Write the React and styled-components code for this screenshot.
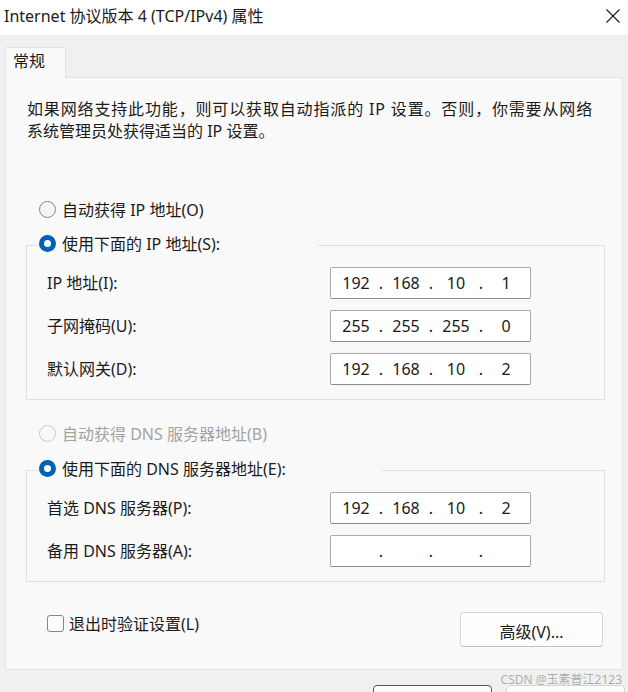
import React from "react";
import styled, { createGlobalStyle } from "styled-components";

const GlobalStyle = createGlobalStyle`
  html, body {
    margin: 0;
    padding: 0;
    background: #f0f0f0;
  }
  body {
    font-family: "Noto Sans", "Noto Sans CJK SC", sans-serif;
    color: #1b1b1b;
  }
  * { box-sizing: border-box; }
`;

const ipGroup = [
  { label: "IP 地址(I):", value: ["192", "168", "10", "1"] },
  { label: "子网掩码(U):", value: ["255", "255", "255", "0"] },
  { label: "默认网关(D):", value: ["192", "168", "10", "2"] },
];

const dnsGroup = [
  { label: "首选 DNS 服务器(P):", value: ["192", "168", "10", "2"] },
  { label: "备用 DNS 服务器(A):", value: ["", "", "", ""] },
];

const IpInput = ({ value }) => (
  <IpBox>
    {value.map((v, i) => (
      <React.Fragment key={i}>
        <Octet>{v}</Octet>
        {i < 3 && <Dot>.</Dot>}
      </React.Fragment>
    ))}
  </IpBox>
);

const App = () => {
  return (
    <Window>
      <GlobalStyle />
      <TitleBar>
        <Title>Internet 协议版本 4 (TCP/IPv4) 属性</Title>
        <Close viewBox="0 0 14 14">
          <path d="M0.5 0.5 L13.5 13.5 M13.5 0.5 L0.5 13.5" />
        </Close>
      </TitleBar>

      <TabStrip>
        <Tab>常规</Tab>
      </TabStrip>

      <Panel>
        <Intro>
          <IntroLine $spacing={0.85}>
            如果网络支持此功能，则可以获取自动指派的 IP 设置。否则，你需要从网络
          </IntroLine>
          <IntroLine>系统管理员处获得适当的 IP 设置。</IntroLine>
        </Intro>

        <RadioRow $top={56}>
          <Radio />
          自动获得 IP 地址(O)
        </RadioRow>

        <Group $top={12}>
          <Legend $width={279}>
            <RadioLabel>
              <Radio $checked />
              使用下面的 IP 地址(S):
            </RadioLabel>
          </Legend>
          <FieldGrid>
            {ipGroup.map((f) => (
              <React.Fragment key={f.label}>
                <FieldLabel>{f.label}</FieldLabel>
                <IpInput value={f.value} />
              </React.Fragment>
            ))}
          </FieldGrid>
        </Group>

        <RadioRow $top={22} $disabled>
          <Radio $disabled />
          自动获得 DNS 服务器地址(B)
        </RadioRow>

        <Group $top={13}>
          <Legend $width={343}>
            <RadioLabel>
              <Radio $checked />
              使用下面的 DNS 服务器地址(E):
            </RadioLabel>
          </Legend>
          <FieldGrid>
            {dnsGroup.map((f) => (
              <React.Fragment key={f.label}>
                <FieldLabel>{f.label}</FieldLabel>
                <IpInput value={f.value} />
              </React.Fragment>
            ))}
          </FieldGrid>
        </Group>

        <Footer>
          <CheckRow>
            <CheckBox />
            退出时验证设置(L)
          </CheckRow>
          <Button>高级(V)...</Button>
        </Footer>
      </Panel>

      {/* OK / Cancel sit below the visible edge, only their tops show */}
      <BottomBar>
        <DialogButton $primary />
        <DialogButton />
      </BottomBar>

      <Watermark>CSDN @玉素普江2123</Watermark>
    </Window>
  );
};

const Window = styled.div`
  position: relative;
  width: 628px;
  height: 692px;
  overflow: hidden;
  background: #f0f0f0;
`;

const TitleBar = styled.div`
  height: 35px;
  background: #fff;
  display: flex;
  align-items: center;
  justify-content: space-between;
  padding: 0 8px 0 4px;
`;

const Title = styled.div`
  font-size: 16px;
  line-height: 22px;
  color: #1a1a1a;
  margin-top: -3px;
`;

const Close = styled.svg`
  width: 14px;
  height: 14px;
  margin-top: -4px;
  fill: none;
  stroke: #1a1a1a;
  stroke-width: 1.1;
`;

const TabStrip = styled.div`
  height: 42px;
  display: flex;
  align-items: flex-end;
  padding-left: 5px;
`;

const Tab = styled.div`
  position: relative;
  z-index: 1;
  width: 61px;
  height: 31px;
  margin-bottom: -1px;
  background: #f9f9f9;
  border: 1px solid #e3e3e3;
  border-bottom: none;
  padding-left: 7px;
  font-size: 16px;
  line-height: 27px;
`;

const Panel = styled.div`
  margin: 0 5px;
  height: 593px;
  background: #f9f9f9;
  border: 1px solid #e3e3e3;
  padding-top: 20px;
  display: flex;
  flex-direction: column;
`;

const Intro = styled.div`
  padding-left: 21px;
  font-size: 16px;
  line-height: 22px;
  white-space: nowrap;
`;

const IntroLine = styled.div`
  letter-spacing: ${(p) => p.$spacing || 0}px;
`;

const RadioRow = styled.label`
  display: flex;
  align-items: center;
  gap: 6px;
  height: 22px;
  margin: ${(p) => p.$top}px 0 0 33px;
  font-size: 16px;
  color: ${(p) => (p.$disabled ? "#a3a3a3" : "#1b1b1b")};
`;

const RadioLabel = styled.span`
  display: flex;
  align-items: center;
  gap: 6px;
  height: 22px;
  font-size: 16px;
`;

const Radio = styled.span`
  position: relative;
  flex: none;
  width: 17px;
  height: 17px;
  border-radius: 50%;
  border: ${(p) =>
    p.$checked ? "none" : `1px solid ${p.$disabled ? "#c9c9c9" : "#858585"}`};
  background: ${(p) => (p.$checked ? "#005fb8" : p.$disabled ? "#f9f9f9" : "#f5f5f5")};

  &::after {
    content: "";
    display: ${(p) => (p.$checked ? "block" : "none")};
    position: absolute;
    left: 5px;
    top: 5px;
    width: 7px;
    height: 7px;
    border-radius: 50%;
    background: #fff;
  }
`;

const Group = styled.fieldset`
  margin: ${(p) => p.$top}px 17px 0 20px;
  padding: 0;
  min-width: 0;
  border: 1px solid #e1e1e1;
`;

const Legend = styled.legend`
  width: ${(p) => p.$width}px;
  height: 26px;
  margin-left: 12px;
  padding: 0 0 4px;
`;

const FieldGrid = styled.div`
  display: grid;
  grid-template-columns: 283px 201px;
  grid-auto-rows: 32px;
  row-gap: 11px;
  align-items: center;
  padding: 9px 0 14px 20px;
`;

const FieldLabel = styled.div`
  font-size: 16px;
  line-height: 22px;
`;

const IpBox = styled.div`
  width: 201px;
  height: 32px;
  background: #fff;
  border: 1px solid #a9a9a9;
  border-bottom-color: #8d8d8d;
  border-radius: 2px;
  padding-left: 2px;
  display: grid;
  grid-template-columns: 46px 4px 46px 4px 46px 4px 46px;
  align-items: center;
  font-size: 16px;
  color: #1a1a1a;
`;

const Octet = styled.span`
  text-align: center;
  line-height: 22px;
`;

const Dot = styled.span`
  display: flex;
  justify-content: center;
  line-height: 22px;
`;

const Footer = styled.div`
  display: flex;
  align-items: flex-start;
  justify-content: space-between;
  margin-top: 30px;
  padding: 0 19px 0 41px;
`;

const CheckRow = styled.label`
  display: flex;
  align-items: center;
  gap: 5px;
  height: 22px;
  font-size: 16px;
`;

const CheckBox = styled.span`
  width: 17px;
  height: 17px;
  border-radius: 3px;
  border: 1px solid #858585;
  background: #fbfbfb;
`;

const Button = styled.div`
  width: 143px;
  height: 35px;
  background: #fdfdfd;
  border: 1px solid #d6d6d6;
  border-bottom-color: #c2c2c2;
  border-radius: 4px;
  display: flex;
  align-items: center;
  justify-content: center;
  padding-top: 2px;
  font-size: 16px;
`;

const BottomBar = styled.div`
  display: flex;
  justify-content: flex-end;
  gap: 14px;
  padding: 15px 3px 0 0;
`;

const DialogButton = styled.div`
  width: 119px;
  height: 35px;
  background: #fdfdfd;
  border: 1px solid ${(p) => (p.$primary ? "#0067c0" : "#d6d6d6")};
  border-radius: 4px;
`;

const Watermark = styled.div`
  position: absolute;
  right: 6px;
  bottom: 5px;
  font-size: 12px;
  line-height: 14px;
  color: #aaaaaa;
  text-shadow: 0 0 1px #fff;
  white-space: nowrap;
`;

export default App;
